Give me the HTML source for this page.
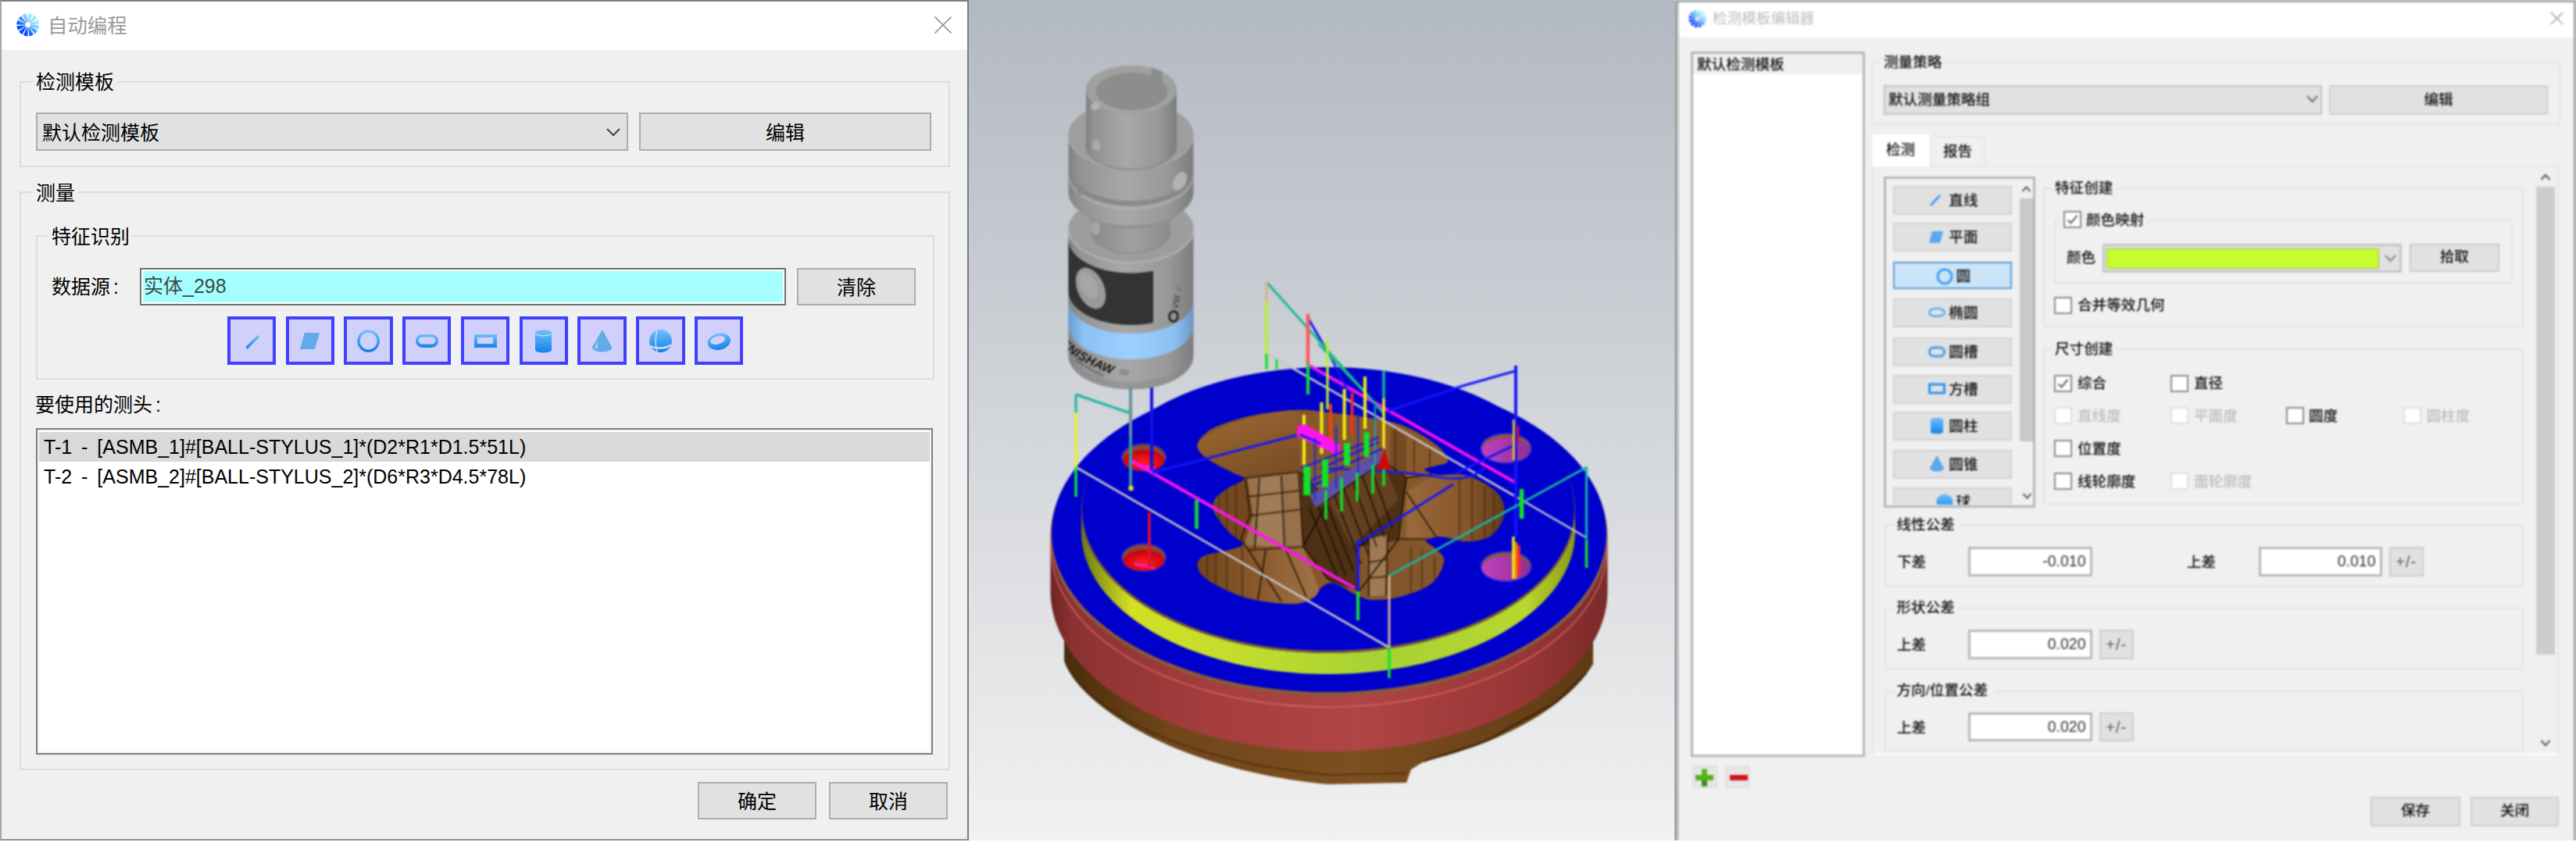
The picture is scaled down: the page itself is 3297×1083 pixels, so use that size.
<!DOCTYPE html>
<html lang="zh-CN">
<head>
<meta charset="utf-8">
<title>自动编程</title>
<style>
*{box-sizing:border-box;margin:0;padding:0}
html,body{width:3297px;height:1083px;overflow:hidden;background:#fff}
body{position:relative;font-family:"Liberation Sans","Noto Sans CJK SC",sans-serif;color:#000}
.abs{position:absolute}
/* ---------- left dialog ---------- */
#L{position:absolute;left:0;top:0;width:1240px;height:1076px;background:#f0f0f0;border:2px solid #8a8e91;border-top-color:#7b8085;border-left-color:#a6a6a6;border-right-color:#7a7f84;border-bottom-color:#8f9293;font-size:25px;line-height:30px}
#L .title{position:absolute;left:0;top:0;width:1236px;height:62px;background:#fff}
#L .t{position:absolute;white-space:nowrap}
#L .c{font-style:normal;margin-left:4px}
#L .gb{position:absolute;border:2px solid #dcdcdc}
#L .gl{position:absolute;background:#f0f0f0;white-space:nowrap;padding:0 4px}
#L .btn{position:absolute;background:#e1e1e1;border:2px solid #adadad;text-align:center;white-space:nowrap}
#L .ib{position:absolute;top:403px;width:62px;height:62px;background:#d0d0fa;border:4px solid #4040ff}
#L .ib svg{position:absolute;left:-4px;top:-4px;width:62px;height:62px}
/* ---------- right dialog ---------- */
#Ri{position:absolute;left:-20px;top:-20px;width:1200px;height:1120px;filter:blur(0.9px);font-size:18.6px;line-height:24px;color:#111;font-weight:500}
#Ri div,#Ri svg.abs{position:absolute}
#Ri .rt{position:absolute;white-space:nowrap}
#Ri .rb{white-space:nowrap}
#Ri .rn{font-size:19.5px;color:#333;font-weight:400}
</style>
</head>
<body>
<svg width="0" height="0" style="position:absolute"><defs>
<linearGradient id="bg" x1="0" y1="0" x2="0" y2="1"><stop offset="0" stop-color="#70c1fb"/><stop offset="1" stop-color="#1482ea"/></linearGradient>
<linearGradient id="ig" x1="1" y1="0" x2="0" y2="1"><stop offset="0.15" stop-color="#a8ecf8"/><stop offset="0.5" stop-color="#4a9cf6"/><stop offset="0.85" stop-color="#0a4cff"/></linearGradient>
</defs></svg>
<!-- ================= LEFT DIALOG ================= -->
<div id="L">
  <div class="title">
    <svg class="abs" style="left:19px;top:15px" width="30" height="30" viewBox="0 0 30 30">
      <circle cx="14.8" cy="14.8" r="9" fill="none" stroke="url(#ig)" stroke-width="11" stroke-dasharray="3.6 1.112"/>
      <circle cx="14.8" cy="14.8" r="3.2" fill="#fff"/>
    </svg>
    <span class="t" style="left:59px;top:16px;color:#9a9a9a;font-size:25.4px">自动编程</span>
    <svg class="abs" style="left:1193px;top:18px" width="24" height="24" viewBox="0 0 24 24"><path d="M1.5 1.5 L22.5 22.5 M22.5 1.5 L1.5 22.5" stroke="#8c8c8c" stroke-width="1.6" fill="none"/></svg>
  </div>

  <!-- group 1 -->
  <div class="gb" style="left:23px;top:102px;width:1191px;height:110px"></div>
  <span class="gl" style="left:40px;top:88px">检测模板</span>
  <div class="abs" style="left:44px;top:142px;width:758px;height:49px;background:#e1e1e1;border:2px solid #adadad"></div>
  <span class="t" style="left:52px;top:153px">默认检测模板</span>
  <svg class="abs" style="left:773px;top:160px" width="20" height="14" viewBox="0 0 20 14"><path d="M2 3 L10 11 L18 3" stroke="#444" stroke-width="2" fill="none"/></svg>
  <div class="btn" style="left:816px;top:142px;width:374px;height:49px;line-height:48px">编辑</div>

  <!-- group 2 -->
  <div class="gb" style="left:23px;top:243px;width:1191px;height:741px"></div>
  <span class="gl" style="left:40px;top:230px">测量</span>
  <!-- group 3 -->
  <div class="gb" style="left:44px;top:299px;width:1150px;height:185px"></div>
  <span class="gl" style="left:60px;top:286px">特征识别</span>
  <span class="t" style="left:64px;top:350px">数据源<i class="c">:</i></span>
  <div class="abs" style="left:177px;top:341px;width:827px;height:48px;background:#a6ffff;border:2px solid #6f6f6f;box-shadow:inset 0 0 0 2px #fff"></div>
  <span class="t" style="left:182px;top:349px;color:#3a4a4a">实体_298</span>
  <div class="btn" style="left:1018px;top:341px;width:152px;height:48px;line-height:46px">清除</div>

  <div class="ib" style="left:289px;width:62px"><svg viewBox="0 0 62 62"><line x1="24.5" y1="40.5" x2="40" y2="25" stroke="url(#bg)" stroke-width="3.4"/></svg></div>
  <div class="ib" style="left:364px;width:62px"><svg viewBox="0 0 62 62"><path d="M23.8 21 H43.1 L36.9 42 H17.9 Z" fill="#62abe8"/></svg></div>
  <div class="ib" style="left:438px;width:63px"><svg viewBox="0 0 62 62"><circle cx="31.6" cy="31.6" r="12.6" fill="none" stroke="url(#bg)" stroke-width="3.6"/></svg></div>
  <div class="ib" style="left:513px;width:62px"><svg viewBox="0 0 62 62"><path fill-rule="evenodd" d="M25.5 23 H37.5 A8.5 8.5 0 0 1 37.5 40 H25.5 A8.5 8.5 0 0 1 25.5 23 Z M25.2 26.4 A4.6 4.6 0 0 0 25.2 35.6 H37.8 A4.6 4.6 0 0 0 37.8 26.4 Z" fill="url(#bg)"/></svg></div>
  <div class="ib" style="left:588px;width:62px"><svg viewBox="0 0 62 62"><path fill-rule="evenodd" d="M17 23 H46 V40 H17 Z M21 27 V35 H41.2 V27 Z" fill="url(#bg)"/></svg></div>
  <div class="ib" style="left:663px;width:62px"><svg viewBox="0 0 62 62"><path d="M20 20.5 C20 16 41 16 41 20.5 V43 C41 47.5 20 47.5 20 43 Z" fill="url(#bg)"/><path d="M20.6 22.6 C24 25.6 37 25.6 40.4 22.6" fill="none" stroke="#bfe0fb" stroke-width="1.3"/></svg></div>
  <div class="ib" style="left:737px;width:63px"><svg viewBox="0 0 62 62"><path d="M31.9 17 L44.2 39.5 C44.2 47.5 19 47.5 19 39.5 Z" fill="#62abe8"/><path d="M26 31 L25.4 41.5 L22.4 40.5 Z" fill="#d0d0fa"/></svg></div>
  <div class="ib" style="left:812px;width:63px"><svg viewBox="0 0 62 62"><circle cx="31.5" cy="31.4" r="14.5" fill="url(#bg)"/><path d="M27.2 17.5 C24.6 26 24.8 37 27 45.6" fill="none" stroke="#c8dcfb" stroke-width="1.5"/><path d="M18.6 38 C24 41.5 39 41.5 44.4 36.5" fill="none" stroke="#c8dcfb" stroke-width="2.6"/></svg></div>
  <div class="ib" style="left:887px;width:62px"><svg viewBox="0 0 62 62"><path fill-rule="evenodd" transform="rotate(-14 31 32)" d="M16.5 32.4 a14.8 10.6 0 1 0 29.6 0 a14.8 10.6 0 1 0 -29.6 0 Z M20.4 30.2 a9.6 5.2 0 1 1 19.2 0 a9.6 5.2 0 1 1 -19.2 0 Z" fill="url(#bg)"/></svg></div>

  <span class="t" style="left:43px;top:501px">要使用的测头<i class="c">:</i></span>
  <div class="abs" style="left:44px;top:546px;width:1148px;height:418px;background:#fff;border:2px solid #7a7f88;box-shadow:inset 0 0 0 2px #f3f3f3"></div>
  <div class="abs" style="left:48px;top:551px;width:1140px;height:38px;background:#d9d9d9"></div>
  <span class="t" style="left:54px;top:555px;word-spacing:5px">T-1 - [ASMB_1]#[BALL-STYLUS_1]*(D2*R1*D1.5*51L)</span>
  <span class="t" style="left:54px;top:593px;word-spacing:5px">T-2 - [ASMB_2]#[BALL-STYLUS_2]*(D6*R3*D4.5*78L)</span>

  <div class="btn" style="left:891px;top:999px;width:152px;height:48px;line-height:46px">确定</div>
  <div class="btn" style="left:1059px;top:999px;width:152px;height:48px;line-height:46px">取消</div>
</div>

<!-- ================= CENTER VIEW ================= -->
<div id="C" class="abs" style="left:1240px;top:0;width:903px;height:1076px;overflow:hidden;background:linear-gradient(#b3b9c2,#f1f1f1)">
<!--CENTER-START-->
<svg class="abs" style="left:0;top:0;filter:blur(0.8px)" width="903" height="1076" viewBox="1240 0 903 1076">
<defs>
<linearGradient id="gR" x1="0" x2="1" y1="0" y2="0"><stop offset="0" stop-color="#6e2424"/><stop offset="0.04" stop-color="#8c3232"/><stop offset="0.3" stop-color="#a63e3e"/><stop offset="0.55" stop-color="#b04545"/><stop offset="0.85" stop-color="#983636"/><stop offset="1" stop-color="#7a2a2a"/></linearGradient>
<linearGradient id="gB" x1="0" x2="1" y1="0" y2="0"><stop offset="0" stop-color="#4a2d0c"/><stop offset="0.2" stop-color="#70461a"/><stop offset="0.55" stop-color="#7d4f20"/><stop offset="1" stop-color="#5e3a12"/></linearGradient>
<linearGradient id="gY" x1="0" x2="1" y1="0" y2="0"><stop offset="0" stop-color="#6f7a10"/><stop offset="0.1" stop-color="#d2e024"/><stop offset="0.3" stop-color="#c4de2c"/><stop offset="0.6" stop-color="#a6d234"/><stop offset="0.9" stop-color="#b8d82e"/><stop offset="1" stop-color="#8a9a18"/></linearGradient>
<linearGradient id="gG" x1="0" x2="1" y1="0" y2="0"><stop offset="0" stop-color="#808080"/><stop offset="0.08" stop-color="#929292"/><stop offset="0.45" stop-color="#a8a8a8"/><stop offset="0.8" stop-color="#989898"/><stop offset="1" stop-color="#7c7c7c"/></linearGradient>
<linearGradient id="gG2" x1="0" x2="1" y1="0" y2="0"><stop offset="0" stop-color="#8a8a8a"/><stop offset="0.5" stop-color="#a0a0a0"/><stop offset="1" stop-color="#8c8c8c"/></linearGradient>
<linearGradient id="gBl" x1="0" x2="1" y1="0" y2="0"><stop offset="0" stop-color="#6a9cd0"/><stop offset="0.12" stop-color="#8cc2f4"/><stop offset="0.5" stop-color="#9cd0ff"/><stop offset="0.85" stop-color="#8cc0f0"/><stop offset="1" stop-color="#6c98c8"/></linearGradient>
<linearGradient id="gTG" gradientUnits="userSpaceOnUse" x1="1621" y1="361" x2="1770" y2="528"><stop offset="0" stop-color="#18b4a0"/><stop offset="0.6" stop-color="#20c070"/><stop offset="1" stop-color="#20d040"/></linearGradient>
<linearGradient id="gTL" x1="0" x2="0.6" y1="0" y2="1"><stop offset="0" stop-color="#b48650"/><stop offset="0.35" stop-color="#94622f"/><stop offset="1" stop-color="#7c4e24"/></linearGradient>
<linearGradient id="gBLl" x1="0" x2="1" y1="0" y2="0"><stop offset="0" stop-color="#6e431a"/><stop offset="0.6" stop-color="#8e5e30"/><stop offset="1" stop-color="#a0744a"/></linearGradient>
<linearGradient id="gRl" x1="0" x2="1" y1="0" y2="0"><stop offset="0" stop-color="#9a6a3c"/><stop offset="0.6" stop-color="#86562a"/><stop offset="1" stop-color="#5e3a16"/></linearGradient>
<linearGradient id="gPk" x1="0" x2="0" y1="0" y2="1"><stop offset="0" stop-color="#9a6a3c"/><stop offset="1" stop-color="#7a4c22"/></linearGradient>
<radialGradient id="gHr" cx="0.5" cy="0.6" r="0.6"><stop offset="0" stop-color="#ff2020"/><stop offset="1" stop-color="#c00010"/></radialGradient>
<linearGradient id="gHm" x1="0" x2="1" y1="0" y2="0"><stop offset="0" stop-color="#c040c0"/><stop offset="1" stop-color="#903090"/></linearGradient>
</defs>
<path d="M1362 790 L1362 846 C1380 900 1500 985 1700 1004 L1800 1002 L1806 985 L1822 975 C1930 950 2010 900 2039 850 L2039 790 Z" fill="url(#gB)"/>
<path d="M1366 852 C1400 915 1520 975 1700 992 L1800 990" fill="none" stroke="#3c2408" stroke-width="1.5" opacity=".7"/>
<path d="M1822 975 C1860 960 1900 955 1925 935 L1990 900 L2030 862" fill="none" stroke="#2e1a05" stroke-width="2" opacity=".8"/>
<path d="M1344.5 686 A356.5 205 0 0 0 2057.5 686 L2057.5 757 A356.5 205 0 0 1 1344.5 757 Z" fill="url(#gR)"/>
<path d="M1345 700 A356 205 0 0 0 2057 700" fill="none" stroke="#e06a6a" stroke-width="1.6" opacity=".8"/>
<ellipse cx="1701" cy="686" rx="356.5" ry="205" fill="#8a5a3a"/>
<ellipse cx="1701" cy="682" rx="355" ry="204" fill="#0000cc"/>
<path d="M1384 654 A316 182 0 0 0 2016 654 L2016 681 A316 182 0 0 1 1384 681 Z" fill="url(#gY)"/>
<ellipse cx="1700" cy="654" rx="316" ry="182" fill="#7a5a30"/>
<ellipse cx="1700" cy="651.5" rx="315" ry="181.5" fill="#0000cc"/>
<path d="M1533 568 C1534.0 563.8 1538.5 558.8 1543 555 C1547.5 551.2 1550.0 548.8 1560 545 C1570.0 541.2 1586.5 535.3 1603 532 C1619.5 528.7 1642.8 525.7 1659 525 C1675.2 524.3 1682.3 526.0 1700 528 C1717.7 530.0 1747.8 533.7 1765 537 C1782.2 540.3 1790.5 542.3 1803 548 C1815.5 553.7 1831.7 564.0 1840 571 C1848.3 578.0 1853.3 585.8 1853 590 C1852.7 594.2 1843.0 594.2 1838 596 C1833.0 597.8 1822.7 599.0 1823 601 C1823.3 603.0 1830.8 606.7 1840 608 C1849.2 609.3 1865.3 605.2 1878 609 C1890.7 612.8 1908.2 622.8 1916 631 C1923.8 639.2 1926.2 649.0 1925 658 C1923.8 667.0 1916.8 679.2 1909 685 C1901.2 690.8 1888.7 692.7 1878 693 C1867.3 693.3 1853.8 687.2 1845 687 C1836.2 686.8 1826.2 689.3 1825 692 C1823.8 694.7 1834.2 698.7 1838 703 C1841.8 707.3 1848.8 710.8 1848 718 C1847.2 725.2 1841.8 738.5 1833 746 C1824.2 753.5 1807.7 759.3 1795 763 C1782.3 766.7 1767.3 768.5 1757 768 C1746.7 767.5 1739.5 762.8 1733 760 C1726.5 757.2 1722.8 753.3 1718 751 C1713.2 748.7 1708.5 745.8 1704 746 C1699.5 746.2 1695.0 748.7 1691 752 C1687.0 755.3 1686.5 762.5 1680 766 C1673.5 769.5 1666.2 773.2 1652 773 C1637.8 772.8 1612.5 770.0 1595 765 C1577.5 760.0 1557.3 749.7 1547 743 C1536.7 736.3 1534.0 730.2 1533 725 C1532.0 719.8 1534.8 715.3 1541 712 C1547.2 708.7 1561.7 707.5 1570 705 C1578.3 702.5 1590.2 700.7 1591 697 C1591.8 693.3 1579.7 687.7 1575 683 C1570.3 678.3 1566.7 674.2 1563 669 C1559.3 663.8 1554.2 657.2 1553 652 C1551.8 646.8 1552.8 642.5 1556 638 C1559.2 633.5 1565.8 629.2 1572 625 C1578.2 620.8 1592.0 616.3 1593 613 C1594.0 609.7 1584.7 608.5 1578 605 C1571.3 601.5 1559.8 596.2 1553 592 C1546.2 587.8 1540.3 584.0 1537 580 C1533.7 576.0 1532.0 572.2 1533 568 Z" fill="url(#gPk)" stroke="#1a10a0" stroke-width="1"/>
<clipPath id="cpk"><path d="M1533 568 C1534.0 563.8 1538.5 558.8 1543 555 C1547.5 551.2 1550.0 548.8 1560 545 C1570.0 541.2 1586.5 535.3 1603 532 C1619.5 528.7 1642.8 525.7 1659 525 C1675.2 524.3 1682.3 526.0 1700 528 C1717.7 530.0 1747.8 533.7 1765 537 C1782.2 540.3 1790.5 542.3 1803 548 C1815.5 553.7 1831.7 564.0 1840 571 C1848.3 578.0 1853.3 585.8 1853 590 C1852.7 594.2 1843.0 594.2 1838 596 C1833.0 597.8 1822.7 599.0 1823 601 C1823.3 603.0 1830.8 606.7 1840 608 C1849.2 609.3 1865.3 605.2 1878 609 C1890.7 612.8 1908.2 622.8 1916 631 C1923.8 639.2 1926.2 649.0 1925 658 C1923.8 667.0 1916.8 679.2 1909 685 C1901.2 690.8 1888.7 692.7 1878 693 C1867.3 693.3 1853.8 687.2 1845 687 C1836.2 686.8 1826.2 689.3 1825 692 C1823.8 694.7 1834.2 698.7 1838 703 C1841.8 707.3 1848.8 710.8 1848 718 C1847.2 725.2 1841.8 738.5 1833 746 C1824.2 753.5 1807.7 759.3 1795 763 C1782.3 766.7 1767.3 768.5 1757 768 C1746.7 767.5 1739.5 762.8 1733 760 C1726.5 757.2 1722.8 753.3 1718 751 C1713.2 748.7 1708.5 745.8 1704 746 C1699.5 746.2 1695.0 748.7 1691 752 C1687.0 755.3 1686.5 762.5 1680 766 C1673.5 769.5 1666.2 773.2 1652 773 C1637.8 772.8 1612.5 770.0 1595 765 C1577.5 760.0 1557.3 749.7 1547 743 C1536.7 736.3 1534.0 730.2 1533 725 C1532.0 719.8 1534.8 715.3 1541 712 C1547.2 708.7 1561.7 707.5 1570 705 C1578.3 702.5 1590.2 700.7 1591 697 C1591.8 693.3 1579.7 687.7 1575 683 C1570.3 678.3 1566.7 674.2 1563 669 C1559.3 663.8 1554.2 657.2 1553 652 C1551.8 646.8 1552.8 642.5 1556 638 C1559.2 633.5 1565.8 629.2 1572 625 C1578.2 620.8 1592.0 616.3 1593 613 C1594.0 609.7 1584.7 608.5 1578 605 C1571.3 601.5 1559.8 596.2 1553 592 C1546.2 587.8 1540.3 584.0 1537 580 C1533.7 576.0 1532.0 572.2 1533 568 Z"/></clipPath>
<g clip-path="url(#cpk)">
<rect x="1520" y="515" width="420" height="270" fill="#875829"/>
<path d="M1528 572 Q1560 538 1660 522 L1664 604 Q1620 618 1594 612 Q1550 596 1528 572 Z" fill="url(#gTL)"/>
<path d="M1594 612 L1662 604 L1668 700 L1598 704 L1588 690 L1600 660 Z" fill="#97714b"/>
<path d="M1612 612 L1640 609 L1644 700 L1606 702 Z" fill="#a88664" opacity=".55"/>
<path d="M1548 650 L1572 622 L1596 612 L1604 660 L1592 698 L1568 676 Z" fill="#74481f"/>
<path d="M1528 726 Q1540 706 1592 698 L1668 700 L1690 760 L1650 778 L1590 770 L1540 746 Z" fill="url(#gBLl)"/>
<path d="M1664 604 L1700 640 L1770 590 L1800 612 L1790 690 L1740 756 L1700 742 L1668 700 Z" fill="#4e3014"/>
<path d="M1700 640 L1770 590 L1790 640 L1730 700 Z" fill="#6a4522" opacity=".8"/>
<path d="M1760 534 L1856 586 L1850 606 L1800 612 L1772 598 Z" fill="#8a5a2c"/>
<path d="M1780 548 L1800 558 L1800 610 L1780 600 Z" fill="#6c431c" opacity=".7"/>
<path d="M1838 606 L1880 606 L1930 640 L1928 680 L1880 698 L1840 690 L1800 690 L1800 630 Z" fill="url(#gRl)"/>
<path d="M1740 700 L1800 690 L1850 716 L1836 750 L1790 768 L1740 764 Z" fill="#83552a"/>
<path d="M1752 690 L1776 684 L1774 762 L1752 764 Z" fill="#a07a55"/>
<path d="M1545 712 L1545 745 M1556 708 L1556 752 M1570 706 L1570 758 M1590 700 L1590 764 M1560 630 L1560 672 M1570 624 L1570 680 M1582 618 L1582 690 M1786 548 L1786 606 M1810 560 L1810 606 M1830 570 L1830 600 M1868 610 L1868 694 M1884 612 L1884 696 M1900 622 L1900 690 M1912 632 L1912 684 M1806 700 L1806 762 M1820 704 L1820 756 M1836 712 L1836 746" stroke="#3a220c" stroke-width="2" opacity=".55" fill="none"/>
<path d="M1594 612 L1662 604 M1594 612 L1600 660 M1600 660 L1588 690 M1588 690 L1598 704 M1598 704 L1668 700 M1662 604 L1668 700 M1612 612 L1606 702 M1640 609 L1644 700 M1600 660 L1666 652 M1596 636 L1664 628 M1664 604 L1700 640 M1700 640 L1668 700 M1700 640 L1770 590 M1668 700 L1700 742 M1700 742 L1740 756 M1676 650 L1712 740 M1686 644 L1722 736 M1696 640 L1732 730 M1708 634 L1742 722 M1720 626 L1752 712 M1732 618 L1762 700 M1744 610 L1772 688 M1756 602 L1782 676 M1770 590 L1800 612 M1800 612 L1790 690 M1790 690 L1740 756 M1800 612 L1838 606 M1800 630 L1840 690 M1790 690 L1840 690 M1752 690 L1752 764 M1776 684 L1774 762 M1752 720 L1775 716 M1752 740 L1775 738 M1740 700 L1752 690 M1598 704 L1640 770 M1644 700 L1672 764 M1620 704 L1610 768" fill="none" stroke="#140a02" stroke-width="1.7" opacity=".85"/>
</g>
<ellipse cx="1464" cy="585.5" rx="29.5" ry="18.5" fill="#1c1cf4"/>
<ellipse cx="1464" cy="585.5" rx="27.5" ry="16.5" fill="#8a4a2a"/>
<ellipse cx="1464" cy="589.5" rx="26.5" ry="13.5" fill="url(#gHr)"/>
<path d="M1452 593.5 L1478 599.5" stroke="#ff20e0" stroke-width="3"/>
<ellipse cx="1464" cy="713.6" rx="29.5" ry="18.5" fill="#1c1cf4"/>
<ellipse cx="1464" cy="713.6" rx="27.5" ry="16.5" fill="#8a4a2a"/>
<ellipse cx="1464" cy="717.6" rx="26.5" ry="13.5" fill="url(#gHr)"/>
<path d="M1452 721.6 L1478 727.6" stroke="#ff20e0" stroke-width="3"/>
<ellipse cx="1927.6" cy="573.8" rx="33.5" ry="20" fill="#1c1cf4"/>
<ellipse cx="1927.6" cy="573.8" rx="31.5" ry="18" fill="#8a5a3a"/>
<ellipse cx="1927.6" cy="576.3" rx="31" ry="16" fill="url(#gHm)"/>
<ellipse cx="1927.6" cy="725" rx="33.5" ry="20" fill="#1c1cf4"/>
<ellipse cx="1927.6" cy="725" rx="31.5" ry="18" fill="#8a5a3a"/>
<ellipse cx="1927.6" cy="727.5" rx="31" ry="16" fill="url(#gHm)"/>
<g id="probe">
<line x1="1447.5" y1="480" x2="1447.5" y2="500" stroke="#4a86b8" stroke-width="3.5"/>
<line x1="1474" y1="480" x2="1474" y2="607" stroke="#1010e8" stroke-width="4"/>
<path d="M1367.5 293 A80 43 0 0 1 1527.5 293 L1527.5 455.5 A80 43 0 0 1 1367.5 455.5 Z" fill="url(#gG)"/>
<ellipse cx="1447.5" cy="293" rx="80" ry="43" fill="#9d9d9d"/>
<path d="M1367.5 293 A80 43 0 0 0 1527.5 293" fill="none" stroke="#b4b4b4" stroke-width="2.5" opacity=".8"/>
<path d="M1367.5 306.5 A80 43 0 0 0 1476 346.7 L1476 413.2 A80 43 0 0 1 1367.5 373.0 Z" fill="#333"/>
<ellipse cx="1396" cy="369" rx="17" ry="28" transform="rotate(-24 1396 369)" fill="#9a9a9a"/>
<ellipse cx="1393" cy="365" rx="10" ry="18" transform="rotate(-24 1393 365)" fill="#a6a6a6"/>
<path d="M1367.5 384.0 A80 43 0 0 0 1527.5 384.0 L1527.5 417.0 A80 43 0 0 1 1367.5 417.0 Z" fill="url(#gBl)"/>
<path d="M1367.5 446.0 A80 43 0 0 0 1527.5 446.0 L1527.5 455.5 A80 43 0 0 1 1367.5 455.5 Z" fill="#888" opacity=".5"/>
<clipPath id="cpb"><path d="M1367.5 293 A80 43 0 0 1 1527.5 293 L1527.5 455.5 A80 43 0 0 1 1367.5 455.5 Z"/></clipPath>
<path id="tp1" d="M1340 420 Q1370 468 1452 487" fill="none"/>
<g clip-path="url(#cpb)"><text font-family="Liberation Sans, sans-serif" font-weight="bold" font-style="italic" font-size="16" fill="#141414" letter-spacing="0.4"><textPath href="#tp1" startOffset="15">RENISHAW</textPath></text>
<path id="tp2" d="M1352 436 Q1384 480 1452 496" fill="none"/>
<text font-family="Liberation Sans, sans-serif" font-size="6" fill="#444"><textPath href="#tp2" startOffset="34">apply innovation</textPath></text>
<rect x="1433" y="473" width="12" height="7" fill="#8c8c8c" transform="rotate(12 1439 476)"/></g>
<g transform="translate(1502 405) rotate(-80)"><ellipse cx="0" cy="0" rx="6.5" ry="5.5" fill="none" stroke="#1e1e1e" stroke-width="2.6"/><text x="10" y="4" font-family="Liberation Sans, sans-serif" font-size="11" font-weight="bold" fill="#505050">VW</text><text x="32" y="4" font-family="Liberation Sans, sans-serif" font-size="8" fill="#6a6a6a">IP</text></g>
<path d="M1397.0 270 A50.5 27 0 0 1 1498.0 270 L1498.0 297 A50.5 27 0 0 1 1397.0 297 Z" fill="url(#gG2)"/>
<path d="M1397.0 297 A50.5 27 0 0 0 1498.0 297" fill="none" stroke="#8a8a8a" stroke-width="2" opacity=".7"/>
<ellipse cx="1402" cy="292" rx="6" ry="9" fill="#b0b0b0" opacity=".7"/>
<path d="M1367.5 246 L1381.5 262 A66 30 0 0 0 1513.5 262 L1527.5 246 Z" fill="#8e8e8e"/>
<path d="M1367.5 173 A80 43 0 0 1 1527.5 173 L1527.5 246 A80 43 0 0 1 1367.5 246 Z" fill="url(#gG)"/>
<path d="M1367.5 214.0 A80 43 0 0 0 1527.5 214.0 L1527.5 221.0 A80 43 0 0 1 1367.5 221.0 Z" fill="#858585" opacity=".8"/>
<path d="M1367.5 221.0 A80 43 0 0 0 1527.5 221.0 L1527.5 226.0 A80 43 0 0 1 1367.5 226.0 Z" fill="#b2b2b2" opacity=".6"/>
<ellipse cx="1447.5" cy="173" rx="80" ry="43" fill="#9e9e9e"/>
<path d="M1367.5 173 A80 43 0 0 0 1527.5 173" fill="none" stroke="#b0b0b0" stroke-width="2" opacity=".7"/>
<ellipse cx="1510" cy="232" rx="8" ry="13" transform="rotate(28 1510 232)" fill="#b2b2b2"/>
<ellipse cx="1383" cy="243" rx="5" ry="7" fill="#8a8a8a"/>
<path d="M1390.0 115 A58 31 0 0 1 1506.0 115 L1506.0 186 A58 31 0 0 1 1390.0 186 Z" fill="url(#gG)"/>
<path d="M1390.0 186 A58 31 0 0 0 1506.0 186" fill="none" stroke="#888" stroke-width="2.5" opacity=".7"/>
<ellipse cx="1448.0" cy="115" rx="58" ry="31" fill="#a0a0a0"/>
<ellipse cx="1448.5" cy="117" rx="46" ry="24" fill="#8d8d8d"/>
<path d="M1402.5 117 A46 24 0 0 0 1494.5 117 A46 30 0 0 1 1402.5 117 Z" fill="#a2a2a2"/>
<path d="M1473.5 83.5 L1488 90 L1488 107.5 L1473.5 103 Z" fill="#8c8c8c"/>
<path d="M1473.5 82 L1488 88.5 L1488 92 L1473.5 86 Z" fill="#b3b9c2"/>
<ellipse cx="1402" cy="136" rx="6" ry="5" fill="#b4b4b4" transform="rotate(-30 1402 136)"/>
<ellipse cx="1403" cy="186" rx="5.5" ry="7" fill="#b0b0b0" opacity=".8"/>
</g>
<g id="lines" stroke-linecap="butt">
<line x1="1377" y1="598" x2="1778" y2="829" stroke="#c6c6c6" stroke-width="2.6" />
<line x1="1621" y1="452" x2="1937" y2="634" stroke="#c6c6c6" stroke-width="2.6" />
<line x1="1937" y1="634" x2="2030" y2="688" stroke="#c6c6c6" stroke-width="2.6" />
<line x1="1448" y1="590" x2="1734" y2="753" stroke="#ff14f0" stroke-width="4" />
<line x1="1676" y1="468" x2="1940" y2="618" stroke="#ff14f0" stroke-width="4" />
<line x1="1475" y1="605" x2="1664" y2="556" stroke="#1414ff" stroke-width="3" />
<line x1="1738" y1="696" x2="1860" y2="620" stroke="#1414ff" stroke-width="3" />
<line x1="1860" y1="607.5" x2="1940" y2="569" stroke="#1414ff" stroke-width="3" />
<line x1="1777" y1="526" x2="1872" y2="494" stroke="#1414ff" stroke-width="3" />
<line x1="1872" y1="494" x2="1939" y2="475" stroke="#1414ff" stroke-width="3" />
<line x1="1940" y1="468" x2="1940" y2="687" stroke="#1414ff" stroke-width="4" />
<line x1="1738" y1="692" x2="1738" y2="757" stroke="#1414ff" stroke-width="3.5" />
<line x1="1674" y1="407" x2="1703" y2="457" stroke="#1414ff" stroke-width="3" />
<line x1="1703" y1="457" x2="1725" y2="500" stroke="#1414ff" stroke-width="2.5" />
<path d="M1700 600 Q1790 602 1850 612 Q1880 616 1900 600" fill="none" stroke="#1414ff" stroke-width="2.6"/>
<line x1="1377" y1="505" x2="1447" y2="529" stroke="#18b4a0" stroke-width="3" />
<line x1="1778" y1="737" x2="2031" y2="598" stroke="#18b4a0" stroke-width="3" />
<line x1="1621" y1="361" x2="1770" y2="528" stroke="url(#gTG)" stroke-width="3"/>
<line x1="1687" y1="440" x2="1771" y2="528" stroke="#18b4a0" stroke-width="2.5" />
<line x1="1377" y1="505" x2="1377" y2="528" stroke="#18b4a0" stroke-width="3" />
<line x1="1377" y1="528" x2="1377" y2="598" stroke="#f2f012" stroke-width="3" />
<line x1="1377" y1="598" x2="1377" y2="636" stroke="#12e22a" stroke-width="3.5" />
<line x1="1471" y1="656" x2="1471" y2="727" stroke="#e81030" stroke-width="3.5" />
<line x1="1447" y1="495" x2="1447" y2="560" stroke="#6a90a0" stroke-width="4" />
<line x1="1447" y1="560" x2="1447" y2="622" stroke="#2c98a8" stroke-width="4" />
<rect x="1444.5" y="622" width="6" height="6" fill="#f0e020"/>
<line x1="1531.5" y1="640" x2="1531.5" y2="677" stroke="#12e22a" stroke-width="4.5" />
<line x1="1738" y1="757" x2="1738" y2="794" stroke="#12e22a" stroke-width="4" />
<line x1="1778" y1="737" x2="1778" y2="829" stroke="#d2b494" stroke-width="3" />
<line x1="1778" y1="829" x2="1778" y2="868" stroke="#12e22a" stroke-width="3.5" />
<line x1="1947.5" y1="626" x2="1947.5" y2="664" stroke="#12e22a" stroke-width="5.5" />
<line x1="2030.5" y1="598" x2="2030.5" y2="692" stroke="#18b4a0" stroke-width="3" />
<line x1="2030.5" y1="692" x2="2030.5" y2="727" stroke="#12e22a" stroke-width="3.5" />
<line x1="1937.4" y1="537" x2="1937.4" y2="589" stroke="#e8c020" stroke-width="3" />
<line x1="1943" y1="545" x2="1943" y2="566" stroke="#d01040" stroke-width="3" />
<line x1="1937" y1="687" x2="1937" y2="741" stroke="#f2f012" stroke-width="3.5" />
<line x1="1940.5" y1="694" x2="1940.5" y2="741" stroke="#ff8000" stroke-width="3" />
<line x1="1944" y1="698" x2="1944" y2="735" stroke="#ff2a2a" stroke-width="3.5" />
<line x1="1621" y1="361" x2="1621" y2="386" stroke="#d2b494" stroke-width="3.5" />
<line x1="1621" y1="386" x2="1621" y2="453" stroke="#b4f228" stroke-width="3.5" />
<line x1="1621" y1="453" x2="1621" y2="473" stroke="#12e22a" stroke-width="3.5" />
<line x1="1634" y1="460" x2="1634" y2="473" stroke="#12e22a" stroke-width="3" />
<line x1="1674" y1="402" x2="1674" y2="466" stroke="#ff5858" stroke-width="4.5" />
<line x1="1674" y1="466" x2="1674" y2="505" stroke="#12e22a" stroke-width="4" />
<line x1="1699" y1="434" x2="1699" y2="524" stroke="#b4f228" stroke-width="3.2" />
<line x1="1771" y1="475" x2="1771" y2="510" stroke="#18b4a0" stroke-width="3.5" />
<line x1="1771" y1="510" x2="1771" y2="574" stroke="#f2f012" stroke-width="3.5" />
<line x1="1669" y1="531" x2="1669" y2="595" stroke="#f2f012" stroke-width="4" />
<line x1="1691.5" y1="515" x2="1691.5" y2="581" stroke="#f2f012" stroke-width="4" />
<line x1="1720.6" y1="498" x2="1720.6" y2="563" stroke="#f2f012" stroke-width="4" />
<line x1="1747" y1="482" x2="1747" y2="549" stroke="#f2f012" stroke-width="4" />
<line x1="1703" y1="517" x2="1703" y2="574" stroke="#ff4010" stroke-width="3.5" />
<line x1="1730.5" y1="503" x2="1730.5" y2="556" stroke="#ff2a2a" stroke-width="3.5" />
<path d="M1660 546 L1670 543 L1716 570 L1714 584 L1660 558 Z" fill="#ff14f0"/>
<path d="M1676 634 L1764 578 L1770 590 L1684 650 Z" fill="#5a50a8"/>
<line x1="1664" y1="556" x2="1690" y2="568" stroke="#1414ff" stroke-width="2.5" />
<line x1="1690" y1="600" x2="1764" y2="566" stroke="#1414ff" stroke-width="2.5" />
<line x1="1668" y1="628" x2="1700" y2="612" stroke="#1414ff" stroke-width="3" />
<line x1="1683" y1="560" x2="1683" y2="640" stroke="#2030d0" stroke-width="2.2" />
<line x1="1710" y1="545" x2="1710" y2="625" stroke="#2030d0" stroke-width="2.2" />
<line x1="1738" y1="530" x2="1738" y2="610" stroke="#2030d0" stroke-width="2.2" />
<line x1="1760" y1="520" x2="1760" y2="596" stroke="#20a0a0" stroke-width="2.2" />
<line x1="1664" y1="600" x2="1764" y2="560" stroke="#1414ff" stroke-width="2.2" />
<line x1="1676" y1="616" x2="1770" y2="574" stroke="#1414ff" stroke-width="2.2" />
<line x1="1672.7" y1="597" x2="1672.7" y2="634" stroke="#12e22a" stroke-width="9" />
<line x1="1696" y1="588" x2="1696" y2="624" stroke="#12e22a" stroke-width="8" />
<line x1="1724" y1="567" x2="1724" y2="596" stroke="#12e22a" stroke-width="8" />
<line x1="1749" y1="553" x2="1749" y2="585" stroke="#12e22a" stroke-width="7" />
<line x1="1697" y1="628" x2="1697" y2="665" stroke="#12e22a" stroke-width="3.5" />
<line x1="1717" y1="612" x2="1717" y2="655" stroke="#12e22a" stroke-width="3.5" />
<line x1="1737" y1="605" x2="1737" y2="642" stroke="#12e22a" stroke-width="3.5" />
<line x1="1757" y1="595" x2="1757" y2="632" stroke="#12e22a" stroke-width="3.5" />
<line x1="1771" y1="601" x2="1771" y2="622" stroke="#12e22a" stroke-width="3.5" />
<path d="M1772 576 L1762 601 L1780 601 Z" fill="#d00808"/>
</g>
</svg>
<!--CENTER-END-->
</div>

<!-- ================= RIGHT DIALOG ================= -->
<div id="R" class="abs" style="left:2143px;top:0;width:1154px;height:1076px;overflow:hidden;background:#f0f0f0">
<!--RIGHT-START-->
<div id="Ri">
<div style="left:20.0px;top:20.0px;width:1154.0px;height:1076.0px;background:#f0f0f0"></div>
<div style="left:20.0px;top:20.0px;width:3.0px;height:1076.0px;background:#8f969e"></div>
<div style="left:23.0px;top:20.0px;width:3.0px;height:1076.0px;background:#c6c6c6"></div>
<div style="left:20.0px;top:20.0px;width:1154.0px;height:3.0px;background:#a1a6ac"></div>
<div style="left:1171.0px;top:20.0px;width:3.0px;height:1076.0px;background:#a9adb2"></div>
<div style="left:1172.0px;top:20.0px;width:1.0px;height:1076.0px;background:#8e9296"></div>
<div style="left:26.0px;top:23.0px;width:1145.0px;height:45.0px;background:#fff"></div>
<svg class="abs" style="left:37.5px;top:32px" width="23.5" height="23.5" viewBox="0 0 30 30"><circle cx="15" cy="15" r="9" fill="none" stroke="url(#ig)" stroke-width="11" stroke-dasharray="3.6 1.112"/><circle cx="15" cy="15" r="4.2" fill="#d6ddf2"/></svg>
<span class="rt" style="left:69.0px;top:32.0px;color:#bcbcbc;font-weight:400">检测模板编辑器</span>
<svg class="abs" style="left:1141px;top:35px" width="17" height="17" viewBox="0 0 17 17"><path d="M1 1 L16 16 M16 1 L1 16" stroke="#b8b8b8" stroke-width="2" fill="none"/></svg>
<div style="left:41.0px;top:85.5px;width:223.0px;height:903.5px;background:#fff;border:3px solid #b3b7bf"></div>
<div style="left:44.0px;top:88.5px;width:217.0px;height:26.5px;background:#efefef"></div>
<span class="rt" style="left:49.0px;top:90.5px;">默认检测模板</span>
<div style="left:43.0px;top:1000.0px;width:32.0px;height:29.0px;background:#e6e6e6;border:2px solid #e0e0e0"></div>
<div style="left:85.0px;top:1000.0px;width:32.0px;height:29.0px;background:#e6e6e6;border:2px solid #e0e0e0"></div>
<svg class="abs" style="left:46px;top:1003.5px" width="25" height="23" viewBox="0 0 25 23"><path d="M9 0.5 H16 V8 H24 V15 H16 V22.5 H9 V15 H1 V8 H9 Z" fill="#52b41c"/><path d="M9 15 H16 V22.5 H9 Z" fill="#3a8e10"/></svg>
<div style="left:90.5px;top:1011.5px;width:23.5px;height:7.5px;background:#d4101c;border-radius:1px"></div>
<div style="left:271.5px;top:98.5px;width:882.5px;height:81.5px;border:2px solid #e3e3e3"></div>
<div style="left:284.0px;top:96.5px;width:81.5px;height:6.0px;background:#f0f0f0"></div>
<span class="rt" style="left:288.0px;top:87.5px;">测量策略</span>
<div style="left:288.0px;top:129.0px;width:561.0px;height:38.0px;background:#e1e1e1;border:2.5px solid #c4c4c4"></div>
<span class="rt" style="left:294.0px;top:136.0px;">默认测量策略组</span>
<svg class="abs" style="left:828px;top:141px" width="17" height="12" viewBox="0 0 17 12"><path d="M2 2 L8.5 9 L15 2" stroke="#777" stroke-width="2.4" fill="none"/></svg>
<div class="rb" style="left:858.0px;top:129.0px;width:280.0px;height:38.0px;background:#e1e1e1;border:2.5px solid #cfcfcf;text-align:center;line-height:33px">编辑</div>
<div style="left:347.0px;top:194.0px;width:71.0px;height:38.0px;background:#f0f0f0;border:2px solid #e6e6e6;border-bottom:none"></div>
<div style="left:272.5px;top:192.0px;width:74.5px;height:41.0px;background:#fff"></div>
<span class="rt" style="left:291.0px;top:200.0px;">检测</span>
<span class="rt" style="left:364.0px;top:201.5px;">报告</span>
<div style="left:272.5px;top:231.0px;width:879.0px;height:755.5px;border:2px solid #e4e4e4;border-bottom:3px solid #fbfbfb;border-top-color:#e8e8e8"></div>
<div style="left:273.0px;top:231.0px;width:74.0px;height:2.0px;background:#fff"></div>
<div style="left:287.5px;top:246.0px;width:194.0px;height:424.0px;background:#f0f0f0;border:3px solid #b3b7bf"></div>
<div style="left:299.5px;top:258.0px;width:152.5px;height:37.0px;background:#e1e1e1;border:2.5px solid #d2d2d2"></div>
<svg class="abs" style="left:345.3px;top:265.5px" width="22" height="22" viewBox="0 0 22 22"><line x1="3" y1="17" x2="15" y2="4" stroke="#4aa0f0" stroke-width="3"/></svg>
<span class="rt" style="left:371.3px;top:265.0px;">直线</span>
<div style="left:299.5px;top:305.0px;width:152.5px;height:37.0px;background:#e1e1e1;border:2.5px solid #d2d2d2"></div>
<svg class="abs" style="left:345.3px;top:312.5px" width="22" height="22" viewBox="0 0 22 22"><path d="M5 3 H19 L15 18 H1 Z" fill="#58a8ee"/></svg>
<span class="rt" style="left:371.3px;top:312.0px;">平面</span>
<div style="left:299.5px;top:355.0px;width:152.5px;height:35.0px;background:#cce4f7;border:2.5px solid #5a9bd8"></div>
<svg class="abs" style="left:354.6px;top:362.5px" width="22" height="22" viewBox="0 0 22 22"><circle cx="11" cy="11" r="9" fill="none" stroke="#3f9cf4" stroke-width="3"/></svg>
<span class="rt" style="left:380.6px;top:362.0px;">圆</span>
<div style="left:299.5px;top:402.0px;width:152.5px;height:37.0px;background:#e1e1e1;border:2.5px solid #d2d2d2"></div>
<svg class="abs" style="left:345.3px;top:409.5px" width="22" height="22" viewBox="0 0 22 22"><ellipse cx="11" cy="10" rx="10" ry="5" fill="none" stroke="#58aef6" stroke-width="2.6"/></svg>
<span class="rt" style="left:371.3px;top:409.0px;">椭圆</span>
<div style="left:299.5px;top:452.0px;width:152.5px;height:37.0px;background:#e1e1e1;border:2.5px solid #d2d2d2"></div>
<svg class="abs" style="left:345.3px;top:459.5px" width="22" height="22" viewBox="0 0 22 22"><rect x="1.5" y="5" width="19" height="11" rx="5.5" fill="none" stroke="#3f9cf4" stroke-width="3"/></svg>
<span class="rt" style="left:371.3px;top:459.0px;">圆槽</span>
<div style="left:299.5px;top:499.5px;width:152.5px;height:37.0px;background:#e1e1e1;border:2.5px solid #d2d2d2"></div>
<svg class="abs" style="left:345.3px;top:507.0px" width="22" height="22" viewBox="0 0 22 22"><rect x="1.5" y="5" width="19" height="11" fill="none" stroke="#2f90f0" stroke-width="3"/></svg>
<span class="rt" style="left:371.3px;top:506.5px;">方槽</span>
<div style="left:299.5px;top:546.5px;width:152.5px;height:37.0px;background:#e1e1e1;border:2.5px solid #d2d2d2"></div>
<svg class="abs" style="left:345.3px;top:554.0px" width="22" height="22" viewBox="0 0 22 22"><path d="M3 3 C3 0 19 0 19 3 V19 C19 22 3 22 3 19 Z" fill="url(#bg)"/></svg>
<span class="rt" style="left:371.3px;top:553.5px;">圆柱</span>
<div style="left:299.5px;top:595.5px;width:152.5px;height:37.0px;background:#e1e1e1;border:2.5px solid #d2d2d2"></div>
<svg class="abs" style="left:345.3px;top:603.0px" width="22" height="22" viewBox="0 0 22 22"><path d="M11 0 L20 16 C20 22 2 22 2 16 Z" fill="#58a8ee"/></svg>
<span class="rt" style="left:371.3px;top:602.5px;">圆锥</span>
<div style="left:299.5px;top:644.0px;width:152.5px;height:22.0px;background:#e1e1e1;border:2.5px solid #d2d2d2;border-bottom:none"></div>
<div class="abs" style="left:354.6px;top:651.5px;width:22px;height:14.5px;overflow:hidden"><svg width="22" height="22" viewBox="0 0 22 22" style="position:absolute;left:0;top:0"><circle cx="11" cy="11" r="10.5" fill="url(#bg)"/></svg></div>
<div class="abs" style="left:380.6px;top:651.0px;width:22px;height:15.0px;overflow:hidden"><span class="rt" style="left:0;top:0">球</span></div>
<div style="left:461.5px;top:249.0px;width:17.0px;height:417.0px;background:#f0f0f0"></div>
<div style="left:461.5px;top:274.0px;width:17.0px;height:311.0px;background:#c9c9c9"></div>
<svg class="abs" style="left:464px;top:257px" width="13" height="10" viewBox="0 0 13 10"><path d="M1.5 8 L6.5 2.5 L11.5 8" stroke="#666" stroke-width="2.2" fill="none"/></svg>
<svg class="abs" style="left:465px;top:650px" width="13" height="10" viewBox="0 0 13 10"><path d="M1.5 2 L6.5 7.5 L11.5 2" stroke="#666" stroke-width="2.2" fill="none"/></svg>
<div style="left:491.5px;top:259.5px;width:615.5px;height:179.5px;border:2px solid #e3e3e3"></div>
<div style="left:503.0px;top:257.5px;width:83.0px;height:6.0px;background:#f0f0f0"></div>
<span class="rt" style="left:507.0px;top:248.5px;">特征创建</span>
<div style="left:506.0px;top:301.0px;width:586.5px;height:82.0px;border:2px solid #e4e4e4"></div>
<div style="left:513.0px;top:296.0px;width:112.0px;height:12.0px;background:#f0f0f0"></div>
<div style="left:518.0px;top:290.0px;width:23.0px;height:22.0px;background:#fff;border:2.5px solid #8a8a8a"></div>
<svg class="abs" style="left:521px;top:293px" width="17" height="16" viewBox="0 0 17 16"><path d="M2.5 8.5 L6.5 12.5 L14.5 3" stroke="#707070" stroke-width="2.4" fill="none"/></svg>
<span class="rt" style="left:547.0px;top:289.5px;">颜色映射</span>
<span class="rt" style="left:522.0px;top:338.0px;">颜色</span>
<div style="left:567.5px;top:332.0px;width:383.5px;height:37.0px;background:#e1e1e1;border:3px solid #c6c6c6"></div>
<div style="left:573.0px;top:337.5px;width:349.0px;height:26.5px;background:#c6fc30;border:1.5px solid #a8c050"></div>
<svg class="abs" style="left:928px;top:345px" width="17" height="12" viewBox="0 0 17 12"><path d="M2 2 L8.5 9 L15 2" stroke="#888" stroke-width="2.2" fill="none"/></svg>
<div class="rb" style="left:961.0px;top:332.0px;width:114.5px;height:35.5px;background:#e1e1e1;border:2.5px solid #cbcbcb;text-align:center;line-height:30px">拾取</div>
<div style="left:505.5px;top:399.5px;width:23.0px;height:22.0px;background:#fff;border:2.5px solid #8a8a8a"></div>
<span class="rt" style="left:536.0px;top:399.0px;">合并等效几何</span>
<div style="left:491.5px;top:466.0px;width:615.5px;height:200.0px;border:2px solid #e3e3e3"></div>
<div style="left:503.0px;top:464.0px;width:83.0px;height:6.0px;background:#f0f0f0"></div>
<span class="rt" style="left:507.0px;top:454.5px;">尺寸创建</span>
<div style="left:505.5px;top:499.5px;width:23.0px;height:22.0px;background:#fff;border:2.5px solid #8a8a8a"></div>
<svg class="abs" style="left:508.5px;top:502.5px" width="17" height="16" viewBox="0 0 17 16"><path d="M2.5 8.5 L6.5 12.5 L14.5 3" stroke="#707070" stroke-width="2.4" fill="none"/></svg>
<span class="rt" style="left:536.0px;top:499.0px;">综合</span>
<div style="left:654.5px;top:499.5px;width:23.0px;height:22.0px;background:#fff;border:2.5px solid #8a8a8a"></div>
<span class="rt" style="left:685.0px;top:499.0px;">直径</span>
<div style="left:505.5px;top:541.0px;width:23.0px;height:22.0px;background:#fff;border:2.5px solid #dedede"></div>
<span class="rt" style="left:536.0px;top:541.0px;color:#bdbdbd">直线度</span>
<div style="left:654.5px;top:541.0px;width:23.0px;height:22.0px;background:#fff;border:2.5px solid #dedede"></div>
<span class="rt" style="left:685.0px;top:541.0px;color:#bdbdbd">平面度</span>
<div style="left:802.5px;top:541.0px;width:23.0px;height:22.0px;background:#fff;border:2.5px solid #8a8a8a"></div>
<span class="rt" style="left:832.0px;top:541.0px;">圆度</span>
<div style="left:952.5px;top:541.0px;width:23.0px;height:22.0px;background:#fff;border:2.5px solid #dedede"></div>
<span class="rt" style="left:982.5px;top:541.0px;color:#bdbdbd">圆柱度</span>
<div style="left:505.5px;top:583.0px;width:23.0px;height:22.0px;background:#fff;border:2.5px solid #8a8a8a"></div>
<span class="rt" style="left:536.0px;top:583.0px;">位置度</span>
<div style="left:505.5px;top:625.0px;width:23.0px;height:22.0px;background:#fff;border:2.5px solid #8a8a8a"></div>
<span class="rt" style="left:536.0px;top:625.0px;">线轮廓度</span>
<div style="left:654.5px;top:625.0px;width:23.0px;height:22.0px;background:#fff;border:2.5px solid #dedede"></div>
<span class="rt" style="left:685.0px;top:625.0px;color:#bdbdbd">面轮廓度</span>
<div style="left:288.5px;top:691.0px;width:818.5px;height:80.0px;border:2px solid #e3e3e3"></div>
<div style="left:300.5px;top:689.0px;width:83.0px;height:6.0px;background:#f0f0f0"></div>
<span class="rt" style="left:304.5px;top:679.5px;">线性公差</span>
<span class="rt" style="left:305.0px;top:728.0px;">下差</span>
<div class="rb rn" style="left:396.0px;top:720.0px;width:158.5px;height:37.5px;background:#fff;border:3px solid #b9b9b9;text-align:right;padding-right:5px;line-height:30px">-0.010</div>
<span class="rt" style="left:676.0px;top:728.0px;">上差</span>
<div class="rb rn" style="left:767.5px;top:720.0px;width:158.0px;height:37.5px;background:#fff;border:3px solid #b9b9b9;text-align:right;padding-right:5px;line-height:30px">0.010</div>
<div class="rb rn" style="left:935.0px;top:720.0px;width:43.5px;height:37.5px;background:#e1e1e1;border:2.5px solid #cdcdcd;text-align:center;line-height:34px;color:#555;letter-spacing:1px">+/-</div>
<div style="left:288.5px;top:797.5px;width:818.5px;height:79.5px;border:2px solid #e3e3e3"></div>
<div style="left:300.5px;top:795.5px;width:83.0px;height:6.0px;background:#f0f0f0"></div>
<span class="rt" style="left:304.5px;top:785.5px;">形状公差</span>
<span class="rt" style="left:305.0px;top:833.5px;">上差</span>
<div class="rb rn" style="left:396.0px;top:826.0px;width:158.5px;height:37.5px;background:#fff;border:3px solid #b9b9b9;text-align:right;padding-right:5px;line-height:30px">0.020</div>
<div class="rb rn" style="left:564.0px;top:826.0px;width:43.5px;height:37.5px;background:#e1e1e1;border:2.5px solid #cdcdcd;text-align:center;line-height:34px;color:#555;letter-spacing:1px">+/-</div>
<div style="left:288.5px;top:904.0px;width:818.5px;height:78.0px;border:2px solid #e3e3e3"></div>
<div style="left:300.5px;top:902.0px;width:128.0px;height:6.0px;background:#f0f0f0"></div>
<span class="rt" style="left:304.5px;top:892.0px;">方向/位置公差</span>
<span class="rt" style="left:305.0px;top:939.5px;">上差</span>
<div class="rb rn" style="left:396.0px;top:931.5px;width:158.5px;height:37.5px;background:#fff;border:3px solid #b9b9b9;text-align:right;padding-right:5px;line-height:30px">0.020</div>
<div class="rb rn" style="left:564.0px;top:931.5px;width:43.5px;height:37.5px;background:#e1e1e1;border:2.5px solid #cdcdcd;text-align:center;line-height:34px;color:#555;letter-spacing:1px">+/-</div>
<div style="left:1123.0px;top:259.0px;width:24.0px;height:599.0px;background:#cdcdcd"></div>
<svg class="abs" style="left:1128px;top:241px" width="14" height="11" viewBox="0 0 14 11"><path d="M1.5 9 L7 3 L12.5 9" stroke="#666" stroke-width="2.4" fill="none"/></svg>
<svg class="abs" style="left:1128px;top:966px" width="14" height="11" viewBox="0 0 14 11"><path d="M1.5 2 L7 8 L12.5 2" stroke="#666" stroke-width="2.4" fill="none"/></svg>
<div class="rb" style="left:911.0px;top:1040.0px;width:115.0px;height:37.5px;background:#e1e1e1;border:2.5px solid #cfcfcf;text-align:center;line-height:32px">保存</div>
<div class="rb" style="left:1039.0px;top:1040.0px;width:113.0px;height:37.5px;background:#e1e1e1;border:2.5px solid #cfcfcf;text-align:center;line-height:32px">关闭</div>
</div>
<!--RIGHT-END-->
</div>
</body>
</html>
